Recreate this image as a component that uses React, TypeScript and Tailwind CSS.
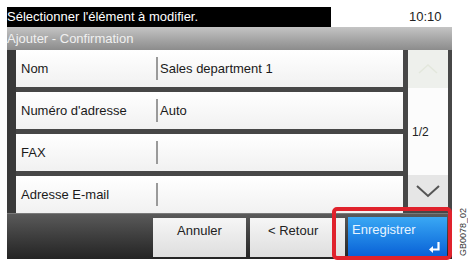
import React from 'react';

const rows = [
  { label: 'Nom', value: 'Sales department 1' },
  { label: "Numéro d'adresse", value: 'Auto' },
  { label: 'FAX', value: '' },
  { label: 'Adresse E-mail', value: '' },
];

const Row: React.FC<{ label: string; value: string }> = ({ label, value }) => (
  <div className="h-[37px] flex items-center bg-gradient-to-b from-[#ffffff] to-[#f1f1f1] text-[13px] text-[#1a1a1a]">
    <div className="w-[140px] pl-[5px]">{label}</div>
    <div className="w-[2px] h-[23px] bg-[#9a9a9a]" />
    <div className="pl-[2px]">{value}</div>
  </div>
);

export default function App() {
  return (
    <div
      className="relative w-[468px] h-[262px] bg-white overflow-hidden"
      style={{ fontFamily: '"Liberation Sans", Arial, sans-serif' }}
    >
      {/* status line */}
      <div className="flex items-end pt-[7px] pl-[7px] h-[27px]">
        <div className="w-[324px] h-[20px] bg-black text-white text-[13px] leading-[20px] whitespace-nowrap">
          Sélectionner l'élément à modifier.
        </div>
        <div className="ml-[78px] text-[13px] leading-[20px] text-[#222]">10:10</div>
      </div>

      <div className="ml-[7px] w-[445px]">
        {/* title */}
        <div className="h-[23px] bg-gradient-to-b from-[#c4c4c4] to-[#8c8c8c] text-[#f0f0f0] text-[13px] leading-[23px]">
          Ajouter - Confirmation
        </div>

        {/* list */}
        <div className="flex h-[163px] bg-[#474747]">
          <div className="w-[9px] bg-[#3a3a3a]" />
          <div className="w-[387px] flex flex-col gap-[5px]">
            {rows.map((r) => (
              <Row key={r.label} label={r.label} value={r.value} />
            ))}
          </div>
          <div className="w-[5px]" />
          <div className="w-[40px] flex flex-col">
            <div className="h-[38px] bg-[#eef0ec] flex items-center justify-center">
              <svg width="22" height="12" viewBox="0 0 22 12" fill="none">
                <path d="M2 10 L11 2 L20 10" stroke="#e3e7dc" strokeWidth="1.5" />
              </svg>
            </div>
            <div className="h-[87px] bg-[#fcfcfc] flex items-center pl-[4px] text-[12px] text-[#222]">
              1/2
            </div>
            <div className="h-[32px] bg-[#e6e6e6] flex items-center justify-center">
              <svg width="26" height="14" viewBox="0 0 26 14" fill="none">
                <path d="M2 2 L13 12 L24 2" stroke="#555" strokeWidth="2" />
              </svg>
            </div>
          </div>
        </div>

        {/* buttons */}
        <div className="flex items-end h-[46px] pb-[2px] pl-[146px] bg-gradient-to-b from-[#5a5a5a] to-[#242424] border-t border-[#7a7a7a]">
          <div className="w-[93px] h-[39px] bg-gradient-to-b from-[#f6f6f6] to-[#dedede] text-center text-[13px] text-[#222] pt-[3px]">
            Annuler
          </div>
          <div className="ml-[4px] w-[95px] h-[39px] bg-gradient-to-b from-[#f6f6f6] to-[#dedede] text-[13px] text-[#222] pt-[3px] pl-[18px]">
            &lt; Retour
          </div>
          <div className="relative ml-[3px] w-[99px] h-[40px] bg-gradient-to-b from-[#3aa8f4] to-[#0a5fd6] text-[13px] text-[#e8f4ff] pt-[3px] pl-[4px]">
            Enregistrer
            <svg className="absolute right-[6px] bottom-[3px]" width="13" height="13" viewBox="0 0 13 13" fill="none">
              <path d="M10.5 1 V8.5 H3" stroke="#ffffff" strokeWidth="2.2" />
              <path d="M1 8.5 L5 5 V12 Z" fill="#ffffff" />
            </svg>
          </div>
        </div>
      </div>

      {/* highlight around the save key */}
      <div className="absolute left-[332px] top-[207px] w-[120px] h-[53px] border-[4px] border-[#e0222c] rounded-[5px]" />

      {/* figure id */}
      <div className="absolute left-[435px] top-[226px] w-[56px] text-[9px] leading-[12px] text-[#333] -rotate-90 text-center">
        GB0078_02
      </div>
    </div>
  );
}
